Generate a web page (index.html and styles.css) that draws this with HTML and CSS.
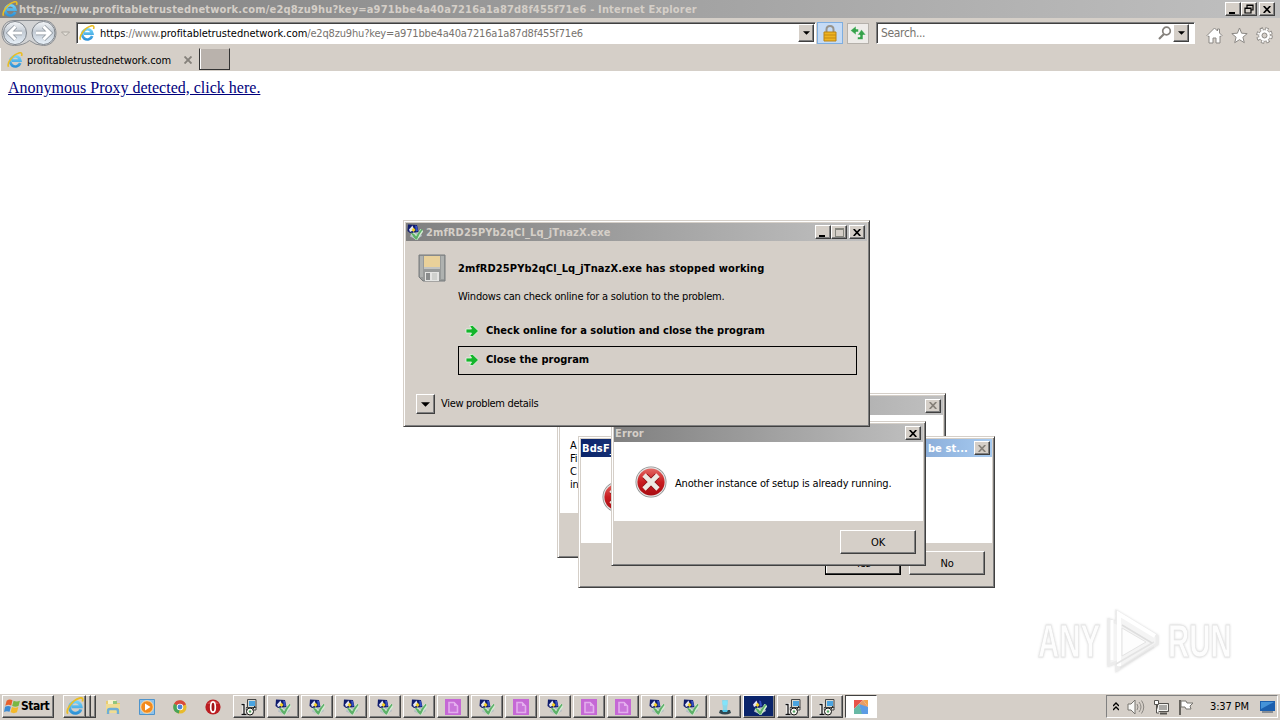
FILE: index.html
```html
<!DOCTYPE html>
<html lang="en">
<head>
  <meta charset="UTF-8">
  <title>https://www.profitabletrustednetwork.com - Internet Explorer</title>
  <link rel="stylesheet" href="styles.css">
</head>
<body>

<!-- shared icons -->
<svg class="defs" width="0" height="0">
  <defs>
    <linearGradient id="blue" x1="0" y1="0" x2="0" y2="1"><stop offset="0" stop-color="#6fd0f7"/><stop offset="1" stop-color="#2f93d8"/></linearGradient>
    <linearGradient id="red" x1="0" y1="0" x2="0" y2="1"><stop offset="0" stop-color="#e46a64"/><stop offset=".5" stop-color="#c81c20"/><stop offset="1" stop-color="#a80c12"/></linearGradient>
    <linearGradient id="nav" x1="0" y1="0" x2="0" y2="1"><stop offset="0" stop-color="#f4f6f8"/><stop offset=".45" stop-color="#c3cbd4"/><stop offset="1" stop-color="#e9f2fa"/></linearGradient>
  </defs>
  <symbol id="ie" viewBox="0 0 16 16">
    <path d="M13.200 11A5.100 5.100 0 1 1 13.400 8.600H5" fill="none" stroke="url(#blue)" stroke-width="2.700"/>
    <path d="M1.600 14.800C-.6 11.600 5.600 2.600 12 .9c2.800-.6 3.400.9 2.500 3.100" fill="none" stroke="#e9bd25" stroke-width="1.600"/>
  </symbol>
  <symbol id="x" viewBox="0 0 8 7"><path d="M.700 0l6.600 7M7.300 0L.700 7" stroke="currentColor" stroke-width="1.700"/></symbol>
  <symbol id="down" viewBox="0 0 8 4"><path d="M0 0h8L4 4z" fill="#000"/></symbol>
  <symbol id="setup" viewBox="0 0 16 16">
    <path d="M4 10l6-2 4 2 1 2-6 3.500-6-3z" fill="#b3bcc4"/>
    <path d="M1 .500l9 .500 1.500 7L3 9 .500 7z" fill="#101c6c"/>
    <path d="M8 1.500l2 .5 1 5-2 .500z" fill="#3550c4"/>
    <path d="M2 5.500L5.500 1.500 7 6l-4 2z" fill="#e4e6f4"/>
    <path d="M4.500 6l2-2.500L8.500 6l-2 2z" fill="#f4cf25"/>
    <path d="M5.500 9.500l4 4.500L15 6" fill="none" stroke="#d3ecd2" stroke-width="3.600"/>
    <path d="M5 9.500q3 1 4 4.500Q11 9 15 5.500 12 9 9.500 15 7.500 14 5 9.500z" fill="#3f9f4c" stroke="#5db068" stroke-width="1.200"/>
  </symbol>
  <symbol id="installer" viewBox="0 0 18 18">
    <path d="M7.500 1.500h8.500v8.500H7.500z" fill="#d8d8d0" stroke="#444"/>
    <path d="M9 3h6v5H9z" fill="#4ba4e0"/>
    <path d="M6 9.500h10V12H6z" fill="#e8e8e0" stroke="#444"/>
    <path d="M1.500 6.500H4V16M1.500 16.500h5" fill="none" stroke="#fff" stroke-width="3"/>
    <path d="M1.500 6.500H4V16M1.500 16.500h5" fill="none" stroke="#111" stroke-width="1.300"/>
    <circle cx="10" cy="13.500" r="3.500" fill="#f7f7f0" stroke="#111"/>
    <circle cx="10" cy="13.500" r="1.200" fill="#59a768"/>
    <path d="M13 11l2-3" stroke="#111"/>
  </symbol>
  <symbol id="doc" viewBox="0 0 16 16">
    <path d="M0 0h16v16H0z" fill="#c568d5"/>
    <path d="M4 3.500h5l3.500 3.500v6.500H4z" fill="#ca76da" stroke="#e3aeed" stroke-width="1.600"/>
    <path d="M9 3v4h4" fill="#e5b0ef"/>
  </symbol>
  <symbol id="error" viewBox="0 0 32 32">
    <circle cx="16" cy="16" r="15.500" fill="#8c8c8c"/>
    <circle cx="16" cy="16" r="14.700" fill="#e4e4e4"/>
    <circle cx="16" cy="16" r="13.600" fill="url(#red)"/>
    <path d="M10 10l12 12M22 10L10 22" stroke="#8d1115" stroke-width="6.500"/>
    <path d="M9 9l14 14M23 9L9 23" stroke="#ece9e2" stroke-width="4.600"/>
  </symbol>
  <symbol id="go" viewBox="0 0 14 14">
    <path d="M1 5h5.500L4.500 1.500h3.300L13.500 7l-5.700 5.500H4.500l2-3.500H1z" fill="#14b52b" stroke="#eaf7e8" stroke-width=".8"/>
  </symbol>
</svg>

<div class="titlebar">
  <svg class="ie-icon" width="16" height="16"><use href="#ie"/></svg>
  <span class="title-text">https://www.profitabletrustednetwork.com/e2q8zu9hu?key=a971bbe4a40a7216a1a87d8f455f71e6 - Internet Explorer</span>
  <div class="win-buttons">
    <span class="wb"><i class="min"></i></span>
    <span class="wb"><svg width="10" height="10" viewBox="0 0 10 10"><path d="M3 4V1h6v5H7M3 1.500h6M1 4h6v5H1zM1 4.500h6" fill="none" stroke="#000" stroke-width="1.200"/></svg></span>
    <span class="wb gap"><svg width="8" height="7"><use href="#x"/></svg></span>
  </div>
</div>

<div class="toolbar">
  <svg class="nav" width="72" height="28" viewBox="0 0 72 28">
    <path d="M14 1.500h29.500c8 0 12.500 6 12.500 12.500s-4.500 12.500-12.500 12.500q-8 0-14-5-6 5-15 5C6 26.500 2 21 2 14S6 1.500 14 1.500z" fill="#d2d3d4" stroke="#8b8e92"/>
    <circle cx="15" cy="14" r="11.500" fill="url(#nav)" stroke="#7f858c"/>
    <circle cx="43.500" cy="14" r="11.500" fill="url(#nav)" stroke="#7f858c"/>
    <path d="M22 14H9.500M15.500 7.500L9 14l6.500 6.500M36 14h13M43.500 7.500L50 14l-6.500 6.500" fill="none" stroke="#8d959d" stroke-width="4.500"/>
    <path d="M22 14H9.500M15.500 7.500L9 14l6.500 6.500M36 14h13M43.500 7.500L50 14l-6.500 6.500" fill="none" stroke="#fff" stroke-width="3"/>
    <path d="M61.500 13h8l-4 4z" fill="#e4e0d9" stroke="#aaa6a0"/>
  </svg>
  <div class="field address">
    <svg width="16" height="16"><use href="#ie"/></svg>
    <span class="url"><b>https</b>://www.<b>profitabletrustednetwork.com</b>/e2q8zu9hu?key=a971bbe4a40a7216a1a87d8f455f71e6</span>
    <span class="drop"><svg width="7" height="4"><use href="#down"/></svg></span>
  </div>
  <div class="lock">
    <svg width="14" height="17" viewBox="0 0 14 17"><path d="M3.500 8V4.500Q3.500 1 7 1t3.500 3.500V8" fill="none" stroke="#98948b" stroke-width="2"/><path d="M1 7h12v9H1z" fill="#eeb422" stroke="#b98315"/><path d="M1 10h12M1 13h12" stroke="#c58a13"/></svg>
  </div>
  <div class="refresh">
    <svg width="16" height="16" viewBox="0 0 16 16"><path d="M6 1L.500 5.500 6 10V7h2.500V4H6zM11.500 4.500L16 10h-3v4.500H7.500V12H10v-2H7.500z" fill="#36a24b" stroke="#f4faf4" stroke-width=".5"/></svg>
  </div>
  <div class="field search">
    <span class="placeholder">Search...</span>
    <svg width="14" height="14" viewBox="0 0 14 14"><circle cx="8.500" cy="5" r="3.800" fill="none" stroke="#85817c" stroke-width="1.700"/><path d="M6 8l-5 5" stroke="#85817c" stroke-width="2.200"/></svg>
    <span class="drop"><svg width="7" height="4"><use href="#down"/></svg></span>
  </div>
  <div class="tools">
    <svg width="17" height="17" viewBox="0 0 17 17"><path d="M1 8.500L8.500 1l3 3V2h2v4L16 8.500l-1 1-1-.5v7h-4v-5H7v5H3V9l-1 .5z" fill="#fff" stroke="#8b8884"/></svg>
    <svg width="17" height="17" viewBox="0 0 17 17"><path d="M8.500 1l2.100 5.200 5.600.4-4.300 3.600 1.400 5.500-4.800-3-4.800 3 1.400-5.500L.8 6.600l5.600-.4z" fill="#fff" stroke="#8b8884"/></svg>
    <svg width="17" height="17" viewBox="0 0 17 17"><circle cx="8.500" cy="8.500" r="6.500" fill="none" stroke="#8b8884" stroke-width="3.600" stroke-dasharray="3 2.105"/><circle cx="8.500" cy="8.500" r="5.800" fill="#fff" stroke="#8b8884" stroke-width=".8"/><circle cx="8.500" cy="8.500" r="6.300" fill="none" stroke="#fff" stroke-width="2.200" stroke-dasharray="1.800 3.148" stroke-dashoffset="-.6"/><circle cx="8.500" cy="8.500" r="2.500" fill="#d5cfc8" stroke="#8b8884"/></svg>
  </div>
</div>

<div class="tabs">
  <div class="tab">
    <svg width="16" height="16"><use href="#ie"/></svg>
    <span class="tab-name">profitabletrustednetwork.com</span>
    <svg class="tab-close" width="8" height="8" viewBox="0 0 8 8"><path d="M.500.500l7 7M7.500.500l-7 7" stroke="#85817b" stroke-width="1.900"/></svg>
  </div>
  <div class="new-tab"></div>
</div>

<div class="page">
  <a class="proxy" href="#">Anonymous Proxy detected, click here.</a>
</div>

<div class="watermark">
  <span class="any">ANY</span>
  <svg width="62" height="66" viewBox="0 0 62 66">
    <path d="M15 4l40 24v8L15 62v-8l-8 3V12l8 3z" fill="#f4f4f4" stroke="#ececec" stroke-width="3"/>
    <path d="M17 58V6l36 22" fill="none" stroke="#fff" stroke-width="4"/>
    <path d="M10 12v40" stroke="#fff" stroke-width="3"/>
    <path d="M14 56l38-22M18 60l34-21" stroke="#e4e4e4" stroke-width="1.500"/>
    <path d="M20 17l30 18" stroke="#dedede" stroke-width="1.500"/>
    <path d="M20 20v28l24-14z" fill="#fdfdfd" stroke="#e4e4e4"/>
  </svg>
  <span class="run">RUN</span>
</div>

<!-- windows, back to front -->
<div class="window win-back">
  <div class="caption"><span class="wb off"><svg width="8" height="7"><use href="#x"/></svg></span></div>
  <div class="white-area">
    <p>A<br>Fi<br>C<br>in</p>
  </div>
  <div class="footer"></div>
</div>

<div class="window win-bds">
  <div class="caption blue"><span class="cap-left">BdsF_</span><span class="cap-right">be st...</span><span class="wb off"><svg width="8" height="7"><use href="#x"/></svg></span></div>
  <div class="white-area"><svg width="32" height="32"><use href="#error"/></svg></div>
  <div class="footer">
    <button class="btn default">Yes</button>
    <button class="btn">No</button>
  </div>
</div>

<div class="window win-error">
  <div class="caption"><span class="cap-left">Error</span><span class="wb"><svg width="8" height="7"><use href="#x"/></svg></span></div>
  <div class="white-area">
    <svg width="32" height="32"><use href="#error"/></svg>
    <span class="msg">Another instance of setup is already running.</span>
  </div>
  <div class="footer"><button class="btn">OK</button></div>
</div>

<div class="window win-crash">
  <div class="caption">
    <svg width="16" height="16"><use href="#setup"/></svg>
    <span class="cap-left">2mfRD25PYb2qCl_Lq_jTnazX.exe</span>
    <span class="wb"><i class="min"></i></span>
    <span class="wb"><i class="max"></i></span>
    <span class="wb gap"><svg width="8" height="7"><use href="#x"/></svg></span>
  </div>
  <div class="crash-body">
    <svg class="floppy" width="28" height="28" viewBox="0 0 28 28"><path d="M1 1h26v26H5l-4-4z" fill="#989b9a" stroke="#777b7c"/><path d="M2 2h3v21H2zM23 2h3v23h-3z" fill="#afb2b0"/><path d="M6 2h16v11H6z" fill="#e9d19a"/><path d="M6 13h16v2H6z" fill="#c2c4c2"/><path d="M7 18h14v9H7z" fill="#e4e5e3"/><path d="M8 19h4v7H8z" fill="#8a8d8d"/><path d="M14 19h5v7h-5z" fill="#cfd1ce"/></svg>
    <div class="crash-main">
      <div class="crash-title">2mfRD25PYb2qCl_Lq_jTnazX.exe has stopped working</div>
      <div class="crash-sub">Windows can check online for a solution to the problem.</div>
      <div class="choice"><svg width="14" height="14"><use href="#go"/></svg><span>Check online for a solution and close the program</span></div>
      <div class="choice focus"><svg width="14" height="14"><use href="#go"/></svg><span>Close the program</span></div>
    </div>
  </div>
  <div class="details">
    <span class="expand"><svg width="9" height="5"><use href="#down"/></svg></span>
    <span class="details-text">View problem details</span>
  </div>
</div>

<div class="taskbar">
  <div class="start">
    <svg width="17" height="17" viewBox="0 0 16 16"><path d="M2.500 2.500Q5 .5 8 2L6.800 7Q4 5.800 1.200 7.300z" fill="#e8602c"/><path d="M9 2.500q3 1.500 6 0l-1.300 5q-3 1.300-6 0z" fill="#79b743"/><path d="M1 8.200q3-1.200 5.500 0L5.200 13Q2.500 11.800 0 13.200z" fill="#3c8bd4"/><path d="M7.500 8.500q3 1.400 6 0l-1.300 5q-3 1.500-6 0z" fill="#f4b92b"/></svg>
    <span>Start</span>
  </div>
  <div class="stack"><div class="stack-btn"><svg width="18" height="18"><use href="#ie"/></svg></div><i></i><i></i></div>
  <div class="quick">
    <svg width="16" height="16" viewBox="0 0 16 16"><path d="M1 2h5l1 2h8v10H1z" fill="#e9cc70"/><path d="M3 1h8v4H3z" fill="#f6f2cf"/><path d="M8 2h4v4H8z" fill="#91c57a"/><path d="M1 5h14v9H1z" fill="#f0dc92"/><path d="M3 15v-3q0-2 2-2h6q2 0 2 2v3" fill="none" stroke="#6faed6" stroke-width="2.400"/></svg>
    <svg width="16" height="16" viewBox="0 0 16 16"><path d="M.5.500h15v15H.5z" fill="#8fc2ea" stroke="#4e94cc"/><circle cx="8" cy="8" r="6.300" fill="#f28a1c" stroke="#ffe0ad"/><path d="M6 4.500v7L11.500 8z" fill="#fff"/></svg>
    <svg width="14" height="14" viewBox="0 0 16 16"><circle cx="8" cy="8" r="7.500" fill="#e8bb2c"/><path d="M8 8L1.200 4.200A7.500 7.500 0 0 1 14.800 5z" fill="#d8493d"/><path d="M8 8L1.200 4.200a7.500 7.500 0 0 0 5.600 11.200z" fill="#48a45a"/><circle cx="8" cy="8" r="3.700" fill="#fff"/><circle cx="8" cy="8" r="2.800" fill="#4a83d4"/></svg>
    <svg width="16" height="16" viewBox="0 0 16 16"><circle cx="8" cy="8" r="7.600" fill="#bb1d22"/><path d="M2 5q6-7 12 0" fill="#e16b6b" opacity=".6"/><ellipse cx="8" cy="8" rx="2.300" ry="5.200" fill="#a11318" stroke="#fff" stroke-width="1.700"/></svg>
  </div>
  <div class="tasks">
    <div class="task"><svg width="18" height="18"><use href="#installer"/></svg></div>
    <div class="task"><svg width="16" height="16"><use href="#setup"/></svg></div>
    <div class="task"><svg width="16" height="16"><use href="#setup"/></svg></div>
    <div class="task"><svg width="16" height="16"><use href="#setup"/></svg></div>
    <div class="task"><svg width="16" height="16"><use href="#setup"/></svg></div>
    <div class="task"><svg width="16" height="16"><use href="#setup"/></svg></div>
    <div class="task"><svg width="16" height="16"><use href="#doc"/></svg></div>
    <div class="task"><svg width="16" height="16"><use href="#setup"/></svg></div>
    <div class="task"><svg width="16" height="16"><use href="#doc"/></svg></div>
    <div class="task"><svg width="16" height="16"><use href="#setup"/></svg></div>
    <div class="task"><svg width="16" height="16"><use href="#doc"/></svg></div>
    <div class="task"><svg width="16" height="16"><use href="#doc"/></svg></div>
    <div class="task"><svg width="16" height="16"><use href="#setup"/></svg></div>
    <div class="task"><svg width="16" height="16"><use href="#setup"/></svg></div>
    <div class="task"><svg width="16" height="16" viewBox="0 0 16 16"><path d="M5 1h6l-1 10H6z" fill="#73d8f2" opacity=".75"/><circle cx="8" cy="4" r="2.500" fill="#82e3fa"/><path d="M3 11h10l1 3q-6 3-12 0z" fill="#31464f"/><path d="M5 11h6l-1 2H6z" fill="#4cc4e8"/></svg></div>
    <div class="task flash"><svg width="16" height="16"><use href="#setup"/></svg></div>
    <div class="task"><svg width="18" height="18"><use href="#installer"/></svg></div>
    <div class="task"><svg width="18" height="18"><use href="#installer"/></svg></div>
    <div class="task active"><svg width="16" height="16" viewBox="0 0 16 16"><path d="M1 1h9L1 10z" fill="#e8544a"/><path d="M10 1h5v7z" fill="#f2a34e"/><path d="M10 1l5 7-4 7L6 5z" fill="#e99d67"/><path d="M1 10l5-5 4 10H1z" fill="#68b9a5"/><path d="M15 8v7H9L6 5z" fill="#5d9ce4"/></svg></div>
  </div>
  <div class="tray">
    <svg width="6" height="9" viewBox="0 0 6 9"><path d="M0 4l3-3 3 3M0 8l3-3 3 3" fill="none" stroke="#000" stroke-width="1.400"/></svg>
    <svg width="18" height="16" viewBox="0 0 18 16"><path d="M1 5h3l4-4v14l-4-4H1z" fill="#f9f9f7" stroke="#77746f"/><path d="M10 5q2 3 0 6M12 3q4 5 0 10M14.500 1.500q4.500 6.500 0 13" fill="none" stroke="#8a8782"/></svg>
    <svg width="17" height="16" viewBox="0 0 17 16"><path d="M4.500 4.500h11v8h-11z" fill="#aaa9a6" stroke="#55534f"/><path d="M5.500 5.500h9v6h-9z" fill="none" stroke="#f2f2ef"/><path d="M7 14.500h7" stroke="#55534f" stroke-width="2"/><path d="M1.500 1.500h4v4h-4zM3.500 6v8H6" fill="#fff" stroke="#55534f"/></svg>
    <svg width="16" height="16" viewBox="0 0 16 16"><path d="M2 1v15" stroke="#66635e" stroke-width="2"/><path d="M3 2h5l1 2h6l-3 3 1 3H8L7 8H3z" fill="#fff" stroke="#77746f"/></svg>
    <span class="clock">3:37 PM</span>
    <svg class="desk" width="16" height="13" viewBox="0 0 16 13"><path d="M0 1h15v10H0z" fill="#1c5fae"/><path d="M1 2h13L1 9z" fill="#4592d8"/><path d="M2 12h11" stroke="#3c4d60"/></svg>
  </div>
</div>

</body>
</html>
```
FILE: styles.css
```css
* {
  box-sizing: border-box;
}

body {
  margin: 0;
  width: 1280px;
  height: 720px;
  overflow: hidden;
  display: flex;
  flex-direction: column;
  background: #fff;
  font-family: "DejaVu Sans Condensed", "DejaVu Sans", sans-serif;
  font-size: 11px;
  line-height: 13px;
  letter-spacing: -0.2px;
  color: #000;
  white-space: nowrap;
}

svg {
  display: block;
  flex: none;
}

.defs {
  position: absolute;
}

/* browser title bar */
.titlebar {
  height: 18px;
  display: flex;
  align-items: center;
  padding: 0 4px 0 2px;
  background: linear-gradient(to right, #808080, #c0c0c0);
  color: #d5cfc8;
  font-weight: bold;
}

.title-text {
  margin-left: 1px;
  letter-spacing: 0.17px;
}

.win-buttons {
  display: flex;
  margin-left: auto;
  padding-right: 1px;
}

.wb {
  width: 16px;
  height: 14px;
  flex: none;
  display: flex;
  align-items: center;
  justify-content: center;
  background: #d5cfc8;
  color: #000;
  border: 1px solid;
  border-color: #fff #404040 #404040 #fff;
  box-shadow: inset -1px -1px #808080;
}

.titlebar .wb:first-child {
  margin-left: 2px;
}

.wb.gap {
  margin-left: 2px;
}

.wb.off {
  color: #858079;
}

.min {
  width: 6px;
  height: 2px;
  margin: 7px 2px 0 0;
  background: #000;
}

.max {
  width: 9px;
  height: 9px;
  border: 1px solid #87877f;
  border-top-width: 2px;
}

/* address row */
.toolbar {
  height: 30px;
  display: flex;
  align-items: center;
  background: #d5cfc8;
}

.nav {
  width: 72px;
  margin-right: 4px;
}

.field {
  height: 22px;
  display: flex;
  align-items: center;
  background: #fff;
  border: 1px solid;
  border-color: #808080 #fff #fff #808080;
  box-shadow: inset 1px 1px #404040;
}

.address {
  width: 740px;
  padding: 0 1px 0 2px;
}

.url {
  margin-left: 5px;
  padding-top: 1px;
  color: #77736e;
  letter-spacing: -0.17px;
}

.url b {
  font-weight: normal;
  color: #000;
  letter-spacing: -0.03px;
}

.drop {
  width: 16px;
  height: 18px;
  margin-left: auto;
  display: flex;
  align-items: center;
  justify-content: center;
  background: #d5cfc8;
  border: 1px solid;
  border-color: #fff #404040 #404040 #fff;
  box-shadow: inset -1px -1px #808080;
}

.lock {
  width: 26px;
  height: 22px;
  margin-left: 1px;
  display: flex;
  align-items: center;
  justify-content: center;
  background: #c5dbf5;
  border: 1px solid #7eaee0;
}

.refresh {
  width: 22px;
  height: 21px;
  margin-left: 4px;
  display: flex;
  align-items: center;
  justify-content: center;
  background: #eeece9;
  border: 1px solid #b5b1ab;
}

.search {
  width: 319px;
  margin-left: 7px;
  padding: 0 5px 0 4px;
}

.placeholder {
  padding-top: 1px;
  color: #77736e;
  font-size: 12px;
  letter-spacing: -0.35px;
}

.search svg {
  margin-left: auto;
}

.search .drop {
  margin-left: 1px;
}

.search .drop svg {
  margin: 0;
}

.tools {
  display: flex;
  gap: 8px;
  margin: 4px 0 0 11px;
}

/* tab row */
.tabs {
  height: 23px;
  display: flex;
  background: #d5cfc8;
}

.tab {
  width: 199px;
  display: flex;
  align-items: center;
  padding: 1px 7px 0 6px;
  border-left: 1px solid #fff;
}

.tab-name {
  margin-left: 4px;
  letter-spacing: -0.13px;
}

.tab-close {
  margin-left: auto;
}

.new-tab {
  width: 31px;
  height: 22px;
  background: #b9b2ac;
  border: 1px solid #333;
  border-top-color: #d5cfc8;
  box-shadow: inset 1px 0 #fff;
}

/* page content */
.page {
  flex: 1;
  padding: 8px;
}

.proxy {
  font: 16px/18px "Liberation Serif", serif;
  letter-spacing: 0;
  color: #00007c;
}

.watermark {
  position: absolute;
  left: 1038px;
  top: 608px;
  display: flex;
  align-items: center;
  font: bold 46px/62px "Liberation Sans", sans-serif;
  letter-spacing: 0;
  color: #fdfdfd;
  -webkit-text-stroke: 1px #e6e6e6;
  filter: drop-shadow(0 0 1px #ddd);
}

.any,
.run {
  width: 64px;
  transform: scaleX(.64);
  transform-origin: left;
}

.run {
  margin-left: 4px;
}

/* windows */
.window {
  position: absolute;
  display: flex;
  flex-direction: column;
  padding: 2px;
  background: #d5cfc8;
  border: 1px solid;
  border-color: #d5cfc8 #404040 #404040 #d5cfc8;
  box-shadow: inset 1px 1px #fff, inset -1px -1px #808080;
}

.caption {
  height: 18px;
  flex: none;
  display: flex;
  align-items: center;
  padding: 0 2px 0 1px;
  background: linear-gradient(to right, #808080, #c0c0c0);
  color: #d5cfc8;
  font-weight: bold;
  letter-spacing: 0.12px;
}

.caption.blue {
  background: linear-gradient(to right, #0a246a, #a6caf0);
  color: #fff;
}

.cap-left {
  margin-right: auto;
}

.white-area {
  flex: none;
  display: flex;
  background: #fff;
}

.footer {
  display: flex;
  justify-content: flex-end;
}

.btn {
  width: 76px;
  height: 24px;
  padding: 0;
  font: inherit;
  letter-spacing: inherit;
  background: #d5cfc8;
  border: 1px solid;
  border-color: #fff #404040 #404040 #fff;
  box-shadow: inset -1px -1px #808080;
}

.btn.default {
  border: 1px solid #000;
  box-shadow: inset -1px -1px #404040, inset 1px 1px #fff;
}

.win-back {
  left: 557px;
  top: 393px;
  width: 389px;
  height: 165px;
}

.win-back .caption {
  height: 19px;
  justify-content: flex-end;
}

.win-back .white-area {
  height: 98px;
  padding: 24px 0 0 10px;
}

.win-back p {
  margin: 0;
}

.win-bds {
  left: 578px;
  top: 436px;
  width: 417px;
  height: 152px;
}

.win-bds .white-area {
  height: 86px;
  padding: 24px 0 0 21px;
}

.cap-right {
  margin-right: 6px;
}

.win-bds .footer {
  gap: 8px;
  padding: 8px 7px 0 0;
}

.win-error {
  left: 611px;
  top: 421px;
  width: 315px;
  height: 145px;
}

.win-error .white-area {
  height: 79px;
  padding: 24px 0 0 21px;
}

.msg {
  margin: 11px 0 0 8px;
  letter-spacing: -0.16px;
}

.win-error .footer {
  padding: 9px 7px 0 0;
}

.win-crash {
  left: 403px;
  top: 220px;
  width: 467px;
  height: 207px;
}

.win-crash .cap-left {
  margin-left: 3px;
}

.crash-body {
  display: flex;
  padding: 13px 10px 0 12px;
}

.crash-main {
  flex: 1;
  margin-left: 12px;
}

.crash-title,
.choice {
  font-weight: bold;
}

.crash-title {
  margin-top: 8px;
  letter-spacing: 0.1px;
}

.crash-sub {
  margin: 15px 0 14px;
  letter-spacing: -0.22px;
}

.choice {
  height: 29px;
  display: flex;
  align-items: center;
  gap: 7px;
  padding: 0 0 2px 6px;
  border: 1px solid transparent;
  letter-spacing: 0;
}

.choice.focus {
  border-color: #000;
}

.details {
  display: flex;
  align-items: center;
  padding: 19px 0 0 10px;
}

.expand {
  width: 19px;
  height: 20px;
  display: flex;
  align-items: center;
  justify-content: center;
  border: 1px solid;
  border-color: #fff #404040 #404040 #fff;
  box-shadow: inset -1px -1px #808080;
}

.details-text {
  margin: -2px 0 0 6px;
  letter-spacing: -0.32px;
}

/* taskbar */
.taskbar {
  height: 27px;
  display: flex;
  padding: 2px 2px 2px;
  background: #d5cfc8;
  box-shadow: inset 0 1px #fff;
}

.start,
.stack-btn,
.stack i,
.task {
  height: 23px;
  border: 1px solid;
  border-color: #fff #404040 #404040 #fff;
  box-shadow: inset -1px -1px #808080;
}

.start {
  width: 52px;
  display: flex;
  align-items: center;
  padding-left: 1px;
  font-size: 12px;
  font-weight: bold;
  letter-spacing: -0.5px;
}

.stack {
  display: flex;
  margin-left: 9px;
}

.stack-btn {
  width: 23px;
  padding: 1px 2px;
}

.stack i {
  width: 5px;
  border-left: 0;
}

.quick {
  display: flex;
  align-items: center;
  gap: 18px;
  margin-left: 9px;
}

.tasks {
  display: flex;
  gap: 2px;
  margin-left: 12px;
}

.task {
  width: 32px;
  display: flex;
  align-items: center;
  justify-content: center;
}

.task.flash {
  background: #0a246a;
}

.task.active {
  background: #fff;
  border-color: #404040 #fff #fff #404040;
  box-shadow: none;
}

.tray {
  width: 172px;
  height: 23px;
  margin-left: auto;
  display: flex;
  align-items: center;
  padding-left: 6px;
  border: 1px solid;
  border-color: #808080 #fff #fff #808080;
}

.tray svg {
  margin-right: 8px;
}

.clock {
  margin-left: 8px;
  letter-spacing: -0.15px;
}

.tray .desk {
  margin: 0 1px 0 auto;
}
```
